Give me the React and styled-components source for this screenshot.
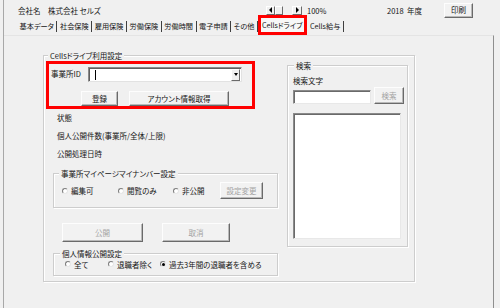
import React from 'react';
import styled, { createGlobalStyle } from 'styled-components';

const Global = createGlobalStyle`
  html, body { margin: 0; padding: 0; background: #f0f0f0; }
  *, *::before, *::after { box-sizing: border-box; }
`;

const Root = styled.div`
  width: 500px;
  height: 308px;
  overflow: hidden;
  background: #f0f0f0;
  padding-left: 3px;
  font-family: "Noto Sans CJK JP", "Noto Sans", sans-serif;
  font-size: 7.5px;
  font-feature-settings: "palt";
  color: #151515;
`;

const Frame = styled.div`
  height: 100%;
  border-left: 1px solid #a8a8a8;
  display: flex;
  flex-direction: column;
`;

const Header = styled.div`
  margin-top: 2px;
  height: 16px;
  padding-left: 14px;
  display: grid;
  grid-template-columns: 30px 218px 41px 80px 57px 29px;
  align-items: center;
  line-height: 11px;
  white-space: nowrap;
`;

const Scroll = styled.div`
  display: flex;
  align-items: center;
  height: 9px;
`;

const ScrollBtn = styled.div`
  width: ${p => p.$w}px;
  height: 9px;
  border: 1px solid;
  border-color: #fff #6a6a6a #6a6a6a #fff;
  background: #f0f0f0;
  display: flex;
  align-items: center;
  justify-content: center;
`;

const Track = styled.div`
  width: 9px;
  height: 9px;
`;

const Arrow = styled.span`
  width: 0;
  height: 0;
  border-top: 3px solid transparent;
  border-bottom: 3px solid transparent;
  ${p => (p.$dir === 'left' ? 'border-right: 3px solid #000;' : 'border-left: 3px solid #000;')}
`;

const Button = styled.button`
  width: ${p => p.$w}px;
  height: ${p => p.$h}px;
  margin-left: ${p => p.$ml || 0}px;
  padding: 0;
  font: inherit;
  font-feature-settings: "palt";
  line-height: 10px;
  color: ${p => (p.$disabled ? '#a3a3a3' : '#151515')};
  background: #f2f2f2;
  border: 1px solid;
  border-color: #fdfdfd #6a6a6a #6a6a6a #fdfdfd;
  box-shadow: inset -1px -1px 0 #b9b9b9;
  flex: none;
`;

const TabsRow = styled.div`
  height: 17px;
  padding-left: 13px;
  display: flex;
  align-items: center;
  white-space: nowrap;
  font-size: 7.2px;
`;

const Tab = styled.div`
  padding: 0 2.5px;
  line-height: 11px;
  border-right: 1px solid #3f3f3f;
`;

const ActiveTab = styled.div`
  align-self: flex-end;
  height: 20px;
  margin-top: -3px;
  border: 3px solid #ff0000;
  background: #f7f7f7;
  padding: 0 2px 0 1px;
  line-height: 13px;
  display: flex;
  align-items: center;
`;

const Panel = styled.div`
  flex: 1;
  width: 490px;
  border-right: 1px solid #8f8f8f;
  border-top: 1px solid #e4e4e4;
  padding: 19px 0 0 39px;
`;

const Group = styled.div`
  position: relative;
  flex: none;
  width: ${p => p.$w}px;
  height: ${p => p.$h}px;
  margin-left: ${p => p.$ml || 0}px;
  margin-top: ${p => p.$mt || 0}px;
  border: 1px solid #cdcdcd;
  box-shadow: inset 1px 1px 0 #fff, 1px 1px 0 #fff;
`;

const Legend = styled.span`
  position: absolute;
  top: -6px;
  left: ${p => p.$left}px;
  padding: 0 2px;
  background: #f0f0f0;
  line-height: 11px;
  white-space: nowrap;
`;

const OuterBody = styled.div`
  display: flex;
  align-items: flex-start;
  padding: 5px 0 0 2px;
`;

const LeftCol = styled.div`
  width: 234px;
  display: flex;
  flex-direction: column;
`;

const RedBox = styled.div`
  width: 209px;
  height: 48px;
  border: 3px solid #ff0000;
  padding: 3px 0 0 2px;
  display: flex;
  flex-direction: column;
`;

const FieldRow = styled.div`
  display: flex;
  align-items: flex-start;
  height: 15px;
`;

const FieldLabel = styled.div`
  width: 37px;
  line-height: 11px;
  padding-top: 1px;
`;

const Combo = styled.div`
  width: 154px;
  height: 15px;
  background: #fff;
  border: 1px solid;
  border-color: #8a8a8a #e2e2e2 #e2e2e2 #8a8a8a;
  box-shadow: inset 1px 1px 0 #5f5f5f;
  display: flex;
  align-items: center;
  padding-left: 6px;
`;

const Caret = styled.span`
  width: 1px;
  height: 10px;
  background: #000;
`;

const DropBtn = styled.div`
  margin-left: auto;
  width: 9px;
  height: 12px;
  margin-right: 1px;
  border: 1px solid;
  border-color: #fff #6a6a6a #6a6a6a #fff;
  background: #f0f0f0;
  display: flex;
  align-items: center;
  justify-content: center;
`;

const Down = styled.span`
  width: 0;
  height: 0;
  border-left: 2.5px solid transparent;
  border-right: 2.5px solid transparent;
  border-top: 3px solid #000;
`;

const ButtonRow = styled.div`
  display: flex;
  margin-top: ${p => p.$mt}px;
`;

const InfoLabel = styled.div`
  margin-left: 11px;
  line-height: 18px;
  white-space: nowrap;
`;

const RadioRow = styled.div`
  display: flex;
  align-items: center;
  height: ${p => p.$h}px;
  margin-top: ${p => p.$mt}px;
  padding-left: ${p => p.$pl}px;
`;

const RadioItem = styled.label`
  width: ${p => p.$w}px;
  display: flex;
  align-items: center;
  white-space: nowrap;
  line-height: 11px;
  flex: none;
`;

const RadioDot = styled.span`
  width: 6px;
  height: 6px;
  margin-right: 3px;
  border-radius: 50%;
  background: #fff;
  border: 1px solid;
  border-color: #7d7d7d #e6e6e6 #e6e6e6 #7d7d7d;
  display: flex;
  align-items: center;
  justify-content: center;
  flex: none;
  &::after {
    content: '';
    width: 3px;
    height: 3px;
    border-radius: 50%;
    background: ${p => (p.$checked ? '#000' : 'transparent')};
  }
`;

const SearchLabel = styled.div`
  margin-top: 9px;
  line-height: 11px;
`;

const SearchRow = styled.div`
  display: flex;
  align-items: flex-end;
  margin-top: 1px;
  height: 17px;
`;

const Sunken = styled.div`
  width: ${p => p.$w}px;
  height: ${p => p.$h}px;
  margin-top: ${p => p.$mt || 0}px;
  background: #fff;
  border: 1px solid;
  border-color: #8a8a8a #e8e8e8 #e8e8e8 #8a8a8a;
  box-shadow: inset 1px 1px 0 #6a6a6a;
  flex: none;
`;

const SearchBody = styled.div`
  padding-left: 5px;
  display: flex;
  flex-direction: column;
`;

const Radio = ({ w, checked, children }) => (
  <RadioItem $w={w}>
    <RadioDot $checked={checked} />
    {children}
  </RadioItem>
);

const tabs = ['基本データ', '社会保険', '雇用保険', '労働保険', '労働時間', '電子申請', 'その他'];

export default function App() {
  return (
    <Root>
      <Global />
      <Frame>
        <Header>
          <span>会社名</span>
          <span>株式会社 セルズ</span>
          <Scroll>
            <ScrollBtn $w={9}><Arrow $dir="left" /></ScrollBtn>
            <ScrollBtn $w={8} />
            <Track />
            <ScrollBtn $w={10}><Arrow $dir="right" /></ScrollBtn>
          </Scroll>
          <span>100%</span>
          <span>2018&nbsp;&nbsp;年度</span>
          <Button $w={29} $h={15}>印刷</Button>
        </Header>
        <TabsRow>
          {tabs.map(t => (
            <Tab key={t}>{t}</Tab>
          ))}
          <ActiveTab>Cellsドライブ</ActiveTab>
          <Tab>Cells給与</Tab>
        </TabsRow>
        <Panel>
          <Group $w={372} $h={227}>
            <Legend $left={4}>Cellsドライブ利用設定</Legend>
            <OuterBody>
              <LeftCol>
                <RedBox>
                  <FieldRow>
                    <FieldLabel>事業所ID</FieldLabel>
                    <Combo>
                      <Caret />
                      <DropBtn><Down /></DropBtn>
                    </Combo>
                  </FieldRow>
                  <ButtonRow $mt={9}>
                    <Button $w={37} $h={15} $ml={30}>登録</Button>
                    <Button $w={100} $h={15} $ml={11}>アカウント情報取得</Button>
                  </ButtonRow>
                </RedBox>
                <InfoLabel>状態</InfoLabel>
                <InfoLabel>個人公開件数(事業所/全体/上限)</InfoLabel>
                <InfoLabel>公開処理日時</InfoLabel>
                <Group $w={225} $h={35} $ml={7} $mt={10}>
                  <Legend $left={5}>事業所マイページマイナンバー設定</Legend>
                  <RadioRow $h={17} $mt={8} $pl={8}>
                    <Radio w={56}>編集可</Radio>
                    <Radio w={55}>閲覧のみ</Radio>
                    <Radio w={47}>非公開</Radio>
                    <Button $w={43} $h={17} $disabled>設定変更</Button>
                  </RadioRow>
                </Group>
                <ButtonRow $mt={15}>
                  <Button $w={81} $h={19} $ml={16} $disabled>公開</Button>
                  <Button $w={68} $h={19} $ml={19} $disabled>取消</Button>
                </ButtonRow>
                <Group $w={225} $h={23} $ml={7} $mt={11}>
                  <Legend $left={6}>個人情報公開設定</Legend>
                  <RadioRow $h={12} $mt={4} $pl={11}>
                    <Radio w={43}>全て</Radio>
                    <Radio w={52}>退職者除く</Radio>
                    <Radio w={110} checked>過去3年間の退職者を含める</Radio>
                  </RadioRow>
                </Group>
              </LeftCol>
              <Group $w={121} $h={182} $ml={7} $mt={4}>
                <Legend $left={6}>検索</Legend>
                <SearchBody>
                  <SearchLabel>検索文字</SearchLabel>
                  <SearchRow>
                    <Sunken $w={78} $h={14} />
                    <Button $w={30} $h={17} $ml={3} $disabled>検索</Button>
                  </SearchRow>
                  <Sunken $w={108} $h={126} $mt={9} />
                </SearchBody>
              </Group>
            </OuterBody>
          </Group>
        </Panel>
      </Frame>
    </Root>
  );
}
